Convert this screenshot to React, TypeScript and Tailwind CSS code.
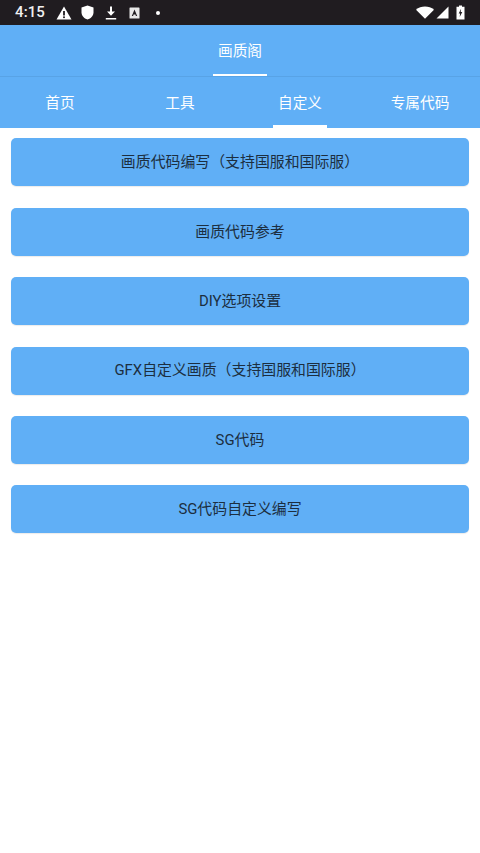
const cjk = "font-['Roboto','Noto_Sans_CJK_SC',sans-serif]";

const buttons = [
  '画质代码编写（支持国服和国际服）',
  '画质代码参考',
  'DIY选项设置',
  'GFX自定义画质（支持国服和国际服）',
  'SG代码',
  'SG代码自定义编写',
];

const tabs = ['首页', '工具', '自定义', '专属代码'];

function StatusBar() {
  return (
    <div className="flex h-[25px] items-center justify-between bg-[#201c20] pl-[15px] pr-[15px] text-white">
      <div className="flex items-center">
        <span className="w-[29px] text-[15px] font-medium leading-none tracking-[0.1px] text-[#f0f0f0]">4:15</span>
        <svg className="ml-[12px]" width="16" height="14" viewBox="0 0 16 14">
          <path fill="#fff" d="M8 0.5 L15.5 13.5 H0.5 Z" />
          <rect x="7.1" y="5" width="1.8" height="4.5" fill="#201c20" />
          <rect x="7.1" y="10.4" width="1.8" height="1.7" fill="#201c20" />
        </svg>
        <svg className="ml-[9px]" width="13" height="15" viewBox="0 0 13 15">
          <path fill="#fff" d="M6.5 0.5 L12.5 2.6 V7.2 C12.5 10.8 10 13.4 6.5 14.5 C3 13.4 0.5 10.8 0.5 7.2 V2.6 Z" />
        </svg>
        <svg className="ml-[11px]" width="12" height="14" viewBox="0 0 12 14">
          <path fill="#fff" d="M5 0.5 H7 V5.5 H10 L6 9.8 L2 5.5 H5 Z" />
          <rect x="0.8" y="12" width="10.4" height="1.5" fill="#fff" />
        </svg>
        <svg className="ml-[12px]" width="11" height="12" viewBox="0 0 11 12">
          <rect x="0.5" y="0.5" width="10" height="11" rx="0.6" fill="#e8e8e8" />
          <path fill="#201c20" d="M5.5 2.4 L8.2 9 H6.9 L6.4 7.6 H4.6 L4.1 9 H2.8 Z" />
        </svg>
        <div className="ml-[16px] h-[4px] w-[4px] rounded-full bg-white" />
      </div>
      <div className="flex items-center">
        <svg width="18" height="13" viewBox="0 0 18 13">
          <path fill="#fff" d="M0 3.7 C4.8 -0.7 13.2 -0.7 18 3.7 L9 12.8 Z" />
        </svg>
        <svg className="ml-[2px]" width="13" height="13" viewBox="0 0 13 13">
          <path fill="#fff" d="M12.5 0.5 V12.5 H0.5 Z" />
        </svg>
        <svg className="ml-[7px]" width="9" height="15" viewBox="0 0 9 15">
          <path fill="#fff" d="M3 0.5 H6 V1.8 H8.5 V14.5 H0.5 V1.8 H3 Z" />
          <path fill="#201c20" d="M5.1 3.8 L2.7 8.4 H4.1 L3.7 12 L6.3 6.9 H4.7 Z" />
        </svg>
      </div>
    </div>
  );
}

export default function App() {
  return (
    <div className={`flex h-[853px] w-[480px] flex-col bg-white ${cjk}`}>
      <StatusBar />
      <div className="flex h-[52px] justify-center border-b border-[#58a3e6] bg-[#60aff6]">
        <div className="flex h-full w-[54px] items-center justify-center border-b-2 border-white pt-[3px] text-[14.67px] text-white">
          画质阁
        </div>
      </div>
      <div className="grid h-[51px] grid-cols-4 bg-[#60aff6]">
        {tabs.map((tab, i) => (
          <div key={tab} className="flex justify-center">
            <div className={`flex h-full items-center justify-center whitespace-nowrap border-b-[3px] pt-[3px] text-[14.67px] text-white ${i === 2 ? 'w-[54px] border-white' : 'border-transparent'}`}>
              {tab}
            </div>
          </div>
        ))}
      </div>
      <div className="flex flex-col gap-[21.4px] px-[11px] pt-[10.4px]">
        {buttons.map((label) => (
          <button key={label} className="flex h-[48px] items-center justify-center rounded-[5px] bg-[#60aff6] text-[14.9px] text-[#1c2e40] shadow-[0_1px_1px_rgba(0,0,0,0.08)]">
            {label}
          </button>
        ))}
      </div>
    </div>
  );
}
